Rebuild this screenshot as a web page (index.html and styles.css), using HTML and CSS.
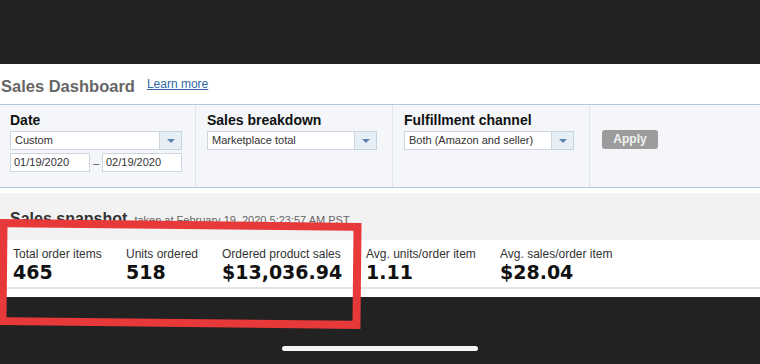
FILE: index.html
```html
<!DOCTYPE html>
<html lang="en">
<head>
  <meta charset="UTF-8">
  <title>Sales Dashboard</title>
  <link rel="stylesheet" href="styles.css">
</head>
<body>

<div class="screen">
  <div class="page">

    <!-- Title -->
    <div class="page-header">
      <h1>Sales Dashboard</h1>
      <a href="#" class="learn-more">Learn more</a>
    </div>

    <!-- Filters -->
    <div class="filters">
      <div class="filter-col">
        <label>Date</label>
        <div class="select">
          <span class="select-value wide">Custom</span>
          <span class="select-arrow"><span class="tri"></span></span>
        </div>
        <div class="date-range">
          <span class="date-input">01/19/2020</span>
          <span class="dash">–</span>
          <span class="date-input">02/19/2020</span>
        </div>
      </div>
      <div class="filter-col">
        <label>Sales breakdown</label>
        <div class="select">
          <span class="select-value">Marketplace total</span>
          <span class="select-arrow"><span class="tri"></span></span>
        </div>
      </div>
      <div class="filter-col">
        <label>Fulfillment channel</label>
        <div class="select">
          <span class="select-value">Both (Amazon and seller)</span>
          <span class="select-arrow"><span class="tri"></span></span>
        </div>
      </div>
      <div class="filter-col last">
        <button class="apply-button">Apply</button>
      </div>
    </div>

    <!-- Snapshot -->
    <div class="snapshot">
      <div class="snapshot-title">
        <h2>Sales snapshot</h2>
        <span class="taken-at">taken at February 19, 2020 5:23:57 AM PST</span>
      </div>
      <div class="stats">
        <div class="stat col-1">
          <div class="stat-label">Total order items</div>
          <div class="stat-value">465</div>
        </div>
        <div class="stat col-2">
          <div class="stat-label">Units ordered</div>
          <div class="stat-value">518</div>
        </div>
        <div class="stat col-3">
          <div class="stat-label">Ordered product sales</div>
          <div class="stat-value">$13,036.94</div>
        </div>
        <div class="stat col-4">
          <div class="stat-label">Avg. units/order item</div>
          <div class="stat-value">1.11</div>
        </div>
        <div class="stat">
          <div class="stat-label">Avg. sales/order item</div>
          <div class="stat-value">$28.04</div>
        </div>
      </div>
    </div>
  </div>

  <!-- red highlight drawn over the screenshot -->
  <div class="highlight"></div>

  <div class="home-bar"></div>
</div>

</body>
</html>
```

FILE: styles.css
```css
body {
  margin: 0;
  padding: 0;
  background-color: #222222;
  font-family: "Liberation Sans", Arial, sans-serif;
  overflow: hidden;
}

.screen {
  position: relative;
  width: 760px;
  height: 364px;
  padding-top: 64px;
  box-sizing: border-box;
}

.page {
  background-color: #ffffff;
  height: 233px;
}

.page-header {
  display: flex;
  align-items: center;
  height: 40px;
}

h1 {
  margin: 0 0 0 1px;
  font-size: 16.5px;
  color: #666666;
  position: relative;
  top: 2px;
}

.learn-more {
  margin-left: 12px;
  font-size: 12px;
  color: #2d6aa3;
  text-decoration: underline;
}

.filters {
  display: grid;
  grid-template-columns: 196px 197px 197px 1fr;
  height: 82px;
  background-color: #f4f6fa;
  border-top: 1px solid #b5c9dc;
  border-bottom: 1px solid #b5c9dc;
}

.filter-col {
  padding: 7px 0 0 11px;
  border-right: 1px solid #dfe4ea;
}

.filter-col:first-child {
  padding-left: 10px;
}

.filter-col.last {
  border-right: none;
  padding-top: 24px;
  padding-left: 12px;
}

.filter-col label {
  display: block;
  font-weight: bold;
  font-size: 14px;
  color: #111111;
  line-height: 16px;
}

.select {
  display: flex;
  margin-top: 3px;
  height: 19px;
}

.select-value {
  width: 142px;
  height: 17px;
  line-height: 17px;
  padding-left: 4px;
  font-size: 11px;
  color: #333333;
  background-color: #ffffff;
  border: 1px solid #cdd6df;
}

.select-value.wide {
  width: 144px;
}

.select-arrow {
  display: flex;
  justify-content: center;
  align-items: center;
  width: 22px;
  height: 19px;
  background-color: #e6eef6;
  border: 1px solid #c6d4e2;
  border-left: none;
  box-sizing: border-box;
}

.tri {
  width: 0;
  height: 0;
  border-left: 4px solid transparent;
  border-right: 4px solid transparent;
  border-top: 4px solid #5b82ab;
}

.date-range {
  display: flex;
  align-items: center;
  margin-top: 3px;
}

.date-input {
  width: 75px;
  height: 17px;
  line-height: 17px;
  padding-left: 3px;
  font-size: 11px;
  color: #333333;
  background-color: #ffffff;
  border: 1px solid #cdd6df;
}

.dash {
  width: 12px;
  text-align: center;
  font-size: 11px;
  color: #555555;
}

.apply-button {
  width: 56px;
  height: 19px;
  padding: 0;
  font-family: "Liberation Sans", Arial, sans-serif;
  font-size: 12px;
  font-weight: bold;
  color: #f2f2f2;
  background-color: #9c9c9c;
  border: none;
  border-radius: 3px;
}

.snapshot {
  margin-top: 5px;
  background-color: #f2f2f2;
}

.snapshot-title {
  display: flex;
  align-items: baseline;
  height: 47px;
  padding: 17px 0 0 10px;
  box-sizing: border-box;
}

h2 {
  margin: 0;
  font-size: 16px;
  color: #333333;
}

.taken-at {
  margin-left: 7px;
  font-size: 11px;
  color: #666666;
}

.stats {
  display: flex;
  height: 49px;
  padding: 7px 0 0 13px;
  box-sizing: border-box;
  background-color: #ffffff;
  border-bottom: 2px solid #e2e2e2;
}

.col-1 { width: 113px; }
.col-2 { width: 96px; }
.col-3 { width: 144px; }
.col-4 { width: 134px; }

.stat-label {
  font-size: 12px;
  color: #333333;
  line-height: 14px;
}

.stat-value {
  font-family: "DejaVu Sans", Verdana, sans-serif;
  font-weight: bold;
  font-size: 19px;
  color: #111111;
  line-height: 23px;
}

.highlight {
  position: absolute;
  left: -1px;
  top: 221px;
  width: 346px;
  height: 90px;
  border: 8px solid #e8393a;
  transform: rotate(0.6deg);
}

.home-bar {
  position: absolute;
  left: 282px;
  top: 346px;
  width: 196px;
  height: 5px;
  border-radius: 3px;
  background-color: #f4f4f4;
}
```
